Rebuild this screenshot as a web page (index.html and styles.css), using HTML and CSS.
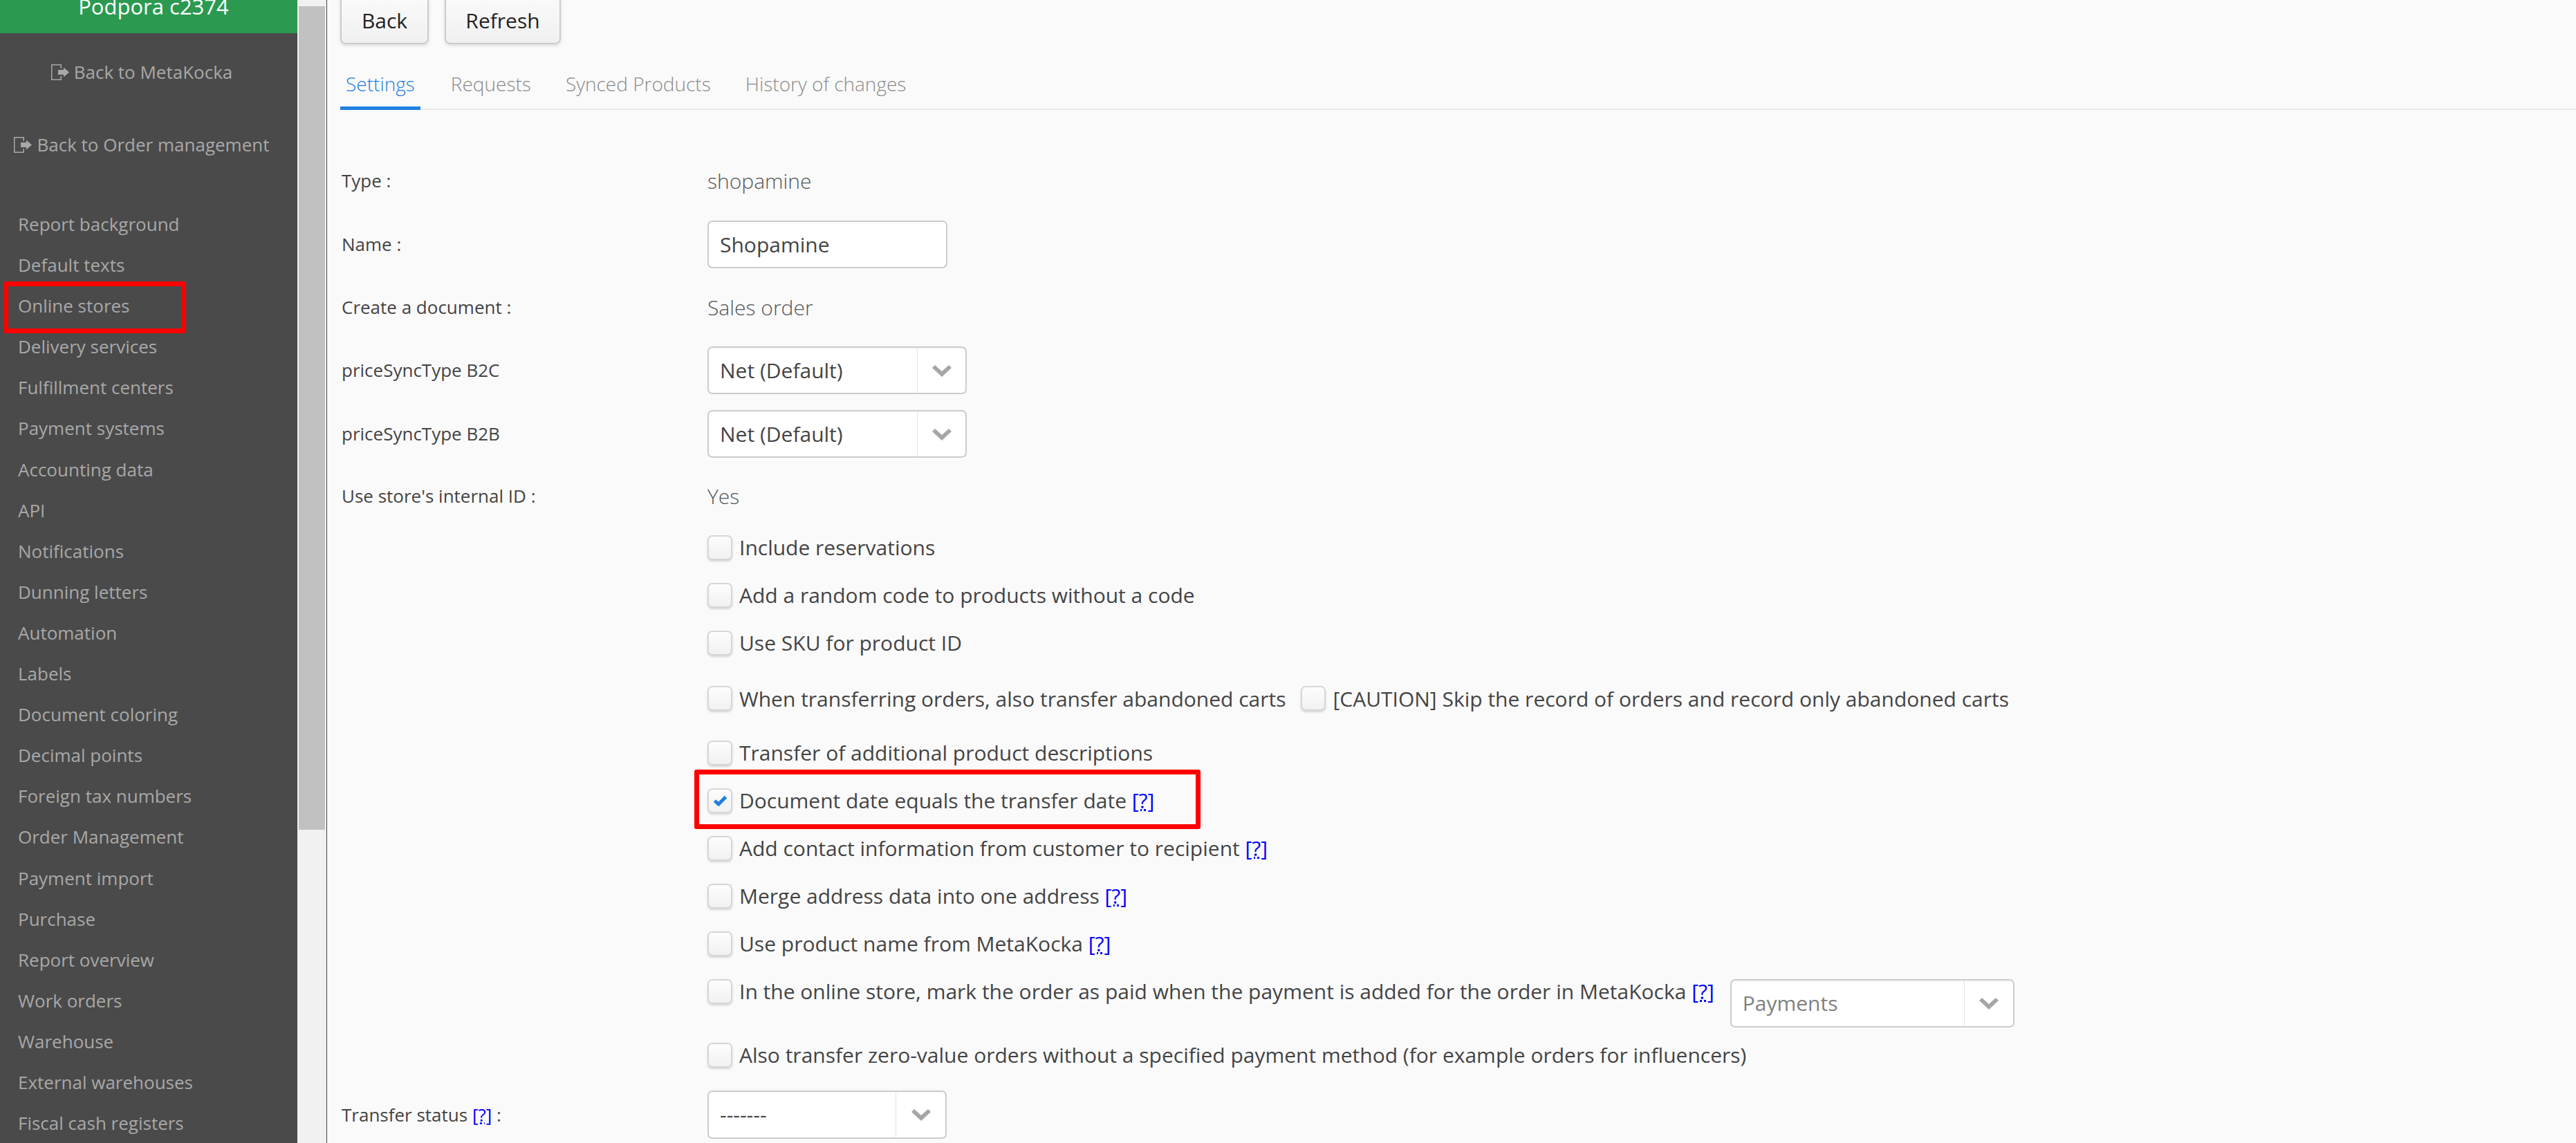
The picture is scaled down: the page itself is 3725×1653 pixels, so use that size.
FILE: index.html
```html
<!DOCTYPE html>
<html lang="en">
<head>
<meta charset="utf-8">
<title>Online stores</title>
<link rel="stylesheet" href="styles.css">
</head>
<body>
<div class="app">
  <aside class="sidebar">
    <div class="account">Podpora c2374</div>
    <a class="back back-first"><svg class="exit" viewBox="0 0 26 23"><path d="M0 0h15v6h-1.500V1.500H1.500v20h12V17H15v6H0z"/><path d="M10 8h8V4.500l8 7-8 7V15h-8z"/></svg>Back to MetaKocka</a>
    <a class="back back-second"><svg class="exit" viewBox="0 0 26 23"><path d="M0 0h15v6h-1.500V1.500H1.500v20h12V17H15v6H0z"/><path d="M10 8h8V4.500l8 7-8 7V15h-8z"/></svg>Back to Order management</a>
    <nav class="menu">
      <a>Report background</a>
      <a>Default texts</a>
      <a class="marked">Online stores<span class="redbox redbox-store"></span></a>
      <a>Delivery services</a>
      <a>Fulfillment centers</a>
      <a>Payment systems</a>
      <a>Accounting data</a>
      <a>API</a>
      <a>Notifications</a>
      <a>Dunning letters</a>
      <a>Automation</a>
      <a>Labels</a>
      <a>Document coloring</a>
      <a>Decimal points</a>
      <a>Foreign tax numbers</a>
      <a>Order Management</a>
      <a>Payment import</a>
      <a>Purchase</a>
      <a>Report overview</a>
      <a>Work orders</a>
      <a>Warehouse</a>
      <a>External warehouses</a>
      <a>Fiscal cash registers</a>
    </nav>
  </aside>
  <div class="scrollbar"><div class="thumb"></div></div>
  <main class="main">
    <div class="actions">
      <button class="btn btn-back">Back</button>
      <button class="btn btn-refresh">Refresh</button>
    </div>
    <div class="tabs">
      <a class="tab active">Settings</a>
      <a class="tab">Requests</a>
      <a class="tab">Synced Products</a>
      <a class="tab">History of changes</a>
    </div>
    <form class="form">
      <div class="row row-type"><span class="label">Type :</span><span class="value">shopamine</span></div>
      <div class="row row-name"><span class="label">Name :</span><span class="input">Shopamine</span></div>
      <div class="row row-doc"><span class="label">Create a document :</span><span class="value">Sales order</span></div>
      <div class="row row-sel1"><span class="label">priceSyncType B2C</span><span class="select sel-net"><span class="sel-text">Net (Default)</span><span class="sel-arrow"><svg class="chev" viewBox="0 0 28 18"><path d="M4 1 14 10 24 1l4 4-14 13L0 5z"/></svg></span></span></div>
      <div class="row row-sel2"><span class="label">priceSyncType B2B</span><span class="select sel-net"><span class="sel-text">Net (Default)</span><span class="sel-arrow"><svg class="chev" viewBox="0 0 28 18"><path d="M4 1 14 10 24 1l4 4-14 13L0 5z"/></svg></span></span></div>
      <div class="row row-id"><span class="label">Use store's internal ID :</span><span class="value">Yes</span></div>

      <div class="checks">
        <label class="check c1"><span class="box"></span><span>Include reservations</span></label>
        <label class="check c2"><span class="box"></span><span>Add a random code to products without a code</span></label>
        <label class="check c3"><span class="box"></span><span>Use SKU for product ID</span></label>
        <div class="check c4"><label class="inner"><span class="box"></span><span>When transferring orders, also transfer abandoned carts</span></label><label class="inner caution"><span class="box"></span><span>[CAUTION] Skip the record of orders and record only abandoned carts</span></label></div>
        <label class="check c5"><span class="box"></span><span>Transfer of additional product descriptions</span></label>
        <label class="check c6"><span class="box"><svg class="tick" viewBox="0 0 21 16"><path d="M2.500 8 8 13 18.500 2.500"/></svg></span><span>Document date equals the transfer date <a class="help">[?]</a></span><span class="redbox redbox-date"></span></label>
        <label class="check c7"><span class="box"></span><span>Add contact information from customer to recipient <a class="help">[?]</a></span></label>
        <label class="check c8"><span class="box"></span><span>Merge address data into one address <a class="help">[?]</a></span></label>
        <label class="check c9"><span class="box"></span><span>Use product name from MetaKocka <a class="help">[?]</a></span></label>
        <div class="check c10"><span class="box"></span><span class="c10-text">In the online store, mark the order as paid when the payment is added for the order in MetaKocka <a class="help">[?]</a></span><span class="select sel-pay"><span class="sel-text placeholder">Payments</span><span class="sel-arrow arrow-pay"><svg class="chev" viewBox="0 0 28 18"><path d="M4 1 14 10 24 1l4 4-14 13L0 5z"/></svg></span></span></div>
        <label class="check c11"><span class="box"></span><span>Also transfer zero-value orders without a specified payment method (for example orders for influencers)</span></label>
      </div>

      <div class="row row-status"><span class="label">Transfer status <a class="help help-label">[?]</a> :</span><span class="select sel-status"><span class="sel-text">-------</span><span class="sel-arrow arrow-status"><svg class="chev" viewBox="0 0 28 18"><path d="M4 1 14 10 24 1l4 4-14 13L0 5z"/></svg></span></span></div>
    </form>
  </main>
</div>
</body>
</html>
```

FILE: styles.css
```css
* { box-sizing: border-box; }
html, body { margin: 0; height: 100%; overflow: hidden; }
body { font-family: "Open Sans", "Liberation Sans", sans-serif; background: #fafafa; color: #444; }
.app { display: flex; height: 1653px; overflow: hidden; }

.sidebar { width: 430px; flex: none; background: #4a4a4a; color: #a8a8a8; font-size: 26px; }
.account { height: 48px; background: #2b9a50; color: #fff; text-align: center; font-size: 31px; line-height: 18px; overflow: hidden; text-indent: 14px; }
.back { display: flex; align-items: center; justify-content: center; white-space: nowrap; font-size: 26px; height: 36px; padding-right: 20px; }
.back-first { margin-top: 38px; }
.back-second { margin-top: 69px; }
.exit { width: 26px; height: 23px; fill: #a8a8a8; margin-right: 7px; flex: none; }
.menu { display: flex; flex-direction: column; margin-top: 68px; padding-left: 26px; }
.menu a { display: block; height: 59.1px; line-height: 59px; white-space: nowrap; position: relative; }

.redbox { position: absolute; border: 7px solid #f00; border-radius: 3px; pointer-events: none; }
.redbox-store { left: -21px; top: -6px; width: 264px; height: 75px; }
.redbox-date { left: -19px; top: -10px; width: 732px; height: 86px; }

.scrollbar { width: 42px; flex: none; background: #f1f1f1; padding: 9px 2px 0; }
.thumb { height: 1191px; background: #c1c1c1; }

.main { flex: 1; min-width: 0; border-left: 1px solid #444; padding-left: 19px; background: #fafafa; font-size: 26px; }

.actions { display: flex; gap: 23px; margin-top: -6px; height: 70px; }
.btn { height: 70px; font: 30px "Open Sans", sans-serif; color: #222; background: linear-gradient(#fafafa, #f0f0f0); border: 2px solid #ccc; border-radius: 8px; box-shadow: 0 2px 5px rgba(0,0,0,.12); padding: 0; }
.btn-back { width: 128px; }
.btn-refresh { width: 168px; }

.tabs { display: flex; margin-top: 31px; border-bottom: 2px solid #e8e8e8; height: 64px; }
.tab { color: #8b8b8b; height: 64px; line-height: 52px; font-size: 28px; white-space: nowrap; padding: 0 42px 0 8px; font-weight: 300; }
.tab.active { color: #1e7fe0; border-bottom: 5px solid #1e7fe0; padding-right: 8px; margin-right: 36px; }

.form { display: flex; flex-direction: column; }
.row { display: flex; align-items: center; }
.label { width: 531px; flex: none; padding-left: 2px; white-space: nowrap; font-size: 26px; color: #444; }
.row-name .label, .row-sel1 .label, .row-sel2 .label { padding-bottom: 2px; }
.value { font-size: 30px; font-weight: 300; color: #555; }
.row-type { margin-top: 84px; height: 36px; }
.row-name { margin-top: 40px; height: 69px; }
.row-doc { margin-top: 36px; height: 40px; }
.row-sel1 { margin-top: 37px; height: 69px; }
.row-sel2 { margin-top: 23px; height: 69px; }
.row-id { margin-top: 35px; height: 40px; }

.input { display: block; width: 347px; height: 69px; line-height: 65px; padding-left: 16px; background: #fff; border: 2px solid #ccc; border-radius: 7px; font-size: 30px; color: #444; }
.select { display: flex; height: 69px; background: #fff; border: 2px solid #ccc; border-radius: 7px; font-size: 30px; color: #444; overflow: hidden; box-shadow: inset 0 2px 2px rgba(0,0,0,.03); }
.sel-net { width: 375px; }
.sel-text { flex: 1; padding-left: 16px; line-height: 65px; white-space: nowrap; }
.sel-arrow { width: 70px; flex: none; display: flex; align-items: center; justify-content: center; border-left: 1px solid #e4e4e4; }
.chev { width: 28px; height: 18px; fill: #a6a6a6; }

.checks { display: flex; flex-direction: column; margin-left: 531px; margin-top: 20px; }
.check { display: flex; align-items: center; font-size: 30px; color: #444; white-space: nowrap; position: relative; height: 69px; }
.inner { display: flex; align-items: center; }
.box { width: 36px; height: 36px; flex: none; margin-right: 10px; border: 2px solid #d6d6d6; border-radius: 7px; background: linear-gradient(#fdfdfd, #f1f1f1); box-shadow: 0 2px 3px rgba(0,0,0,.15); display: flex; align-items: center; justify-content: center; }
.tick { width: 21px; height: 16px; fill: none; stroke: #1e7fe0; stroke-width: 5; }
.help { color: #00f; text-decoration: underline dotted; text-underline-offset: 1px; }
.c4 { height: 70px; margin-top: 11px; }
.c5 { margin-top: 9px; }
.caution { margin-left: 22px; }
.c10 { height: 88px; align-items: flex-start; }
.c10 .box { margin-top: 17px; }
.c10-text { margin-top: 14px; }
.sel-pay { width: 411px; height: 70px; margin-left: 23px; margin-top: 17px; }
.placeholder { color: #808080; }
.arrow-pay { width: 71px; }
.c11 { margin-top: 4px; }

.row-status { margin-top: 17px; height: 70px; }
.sel-status { width: 346px; height: 70px; }
.arrow-status { width: 72px; }
```
